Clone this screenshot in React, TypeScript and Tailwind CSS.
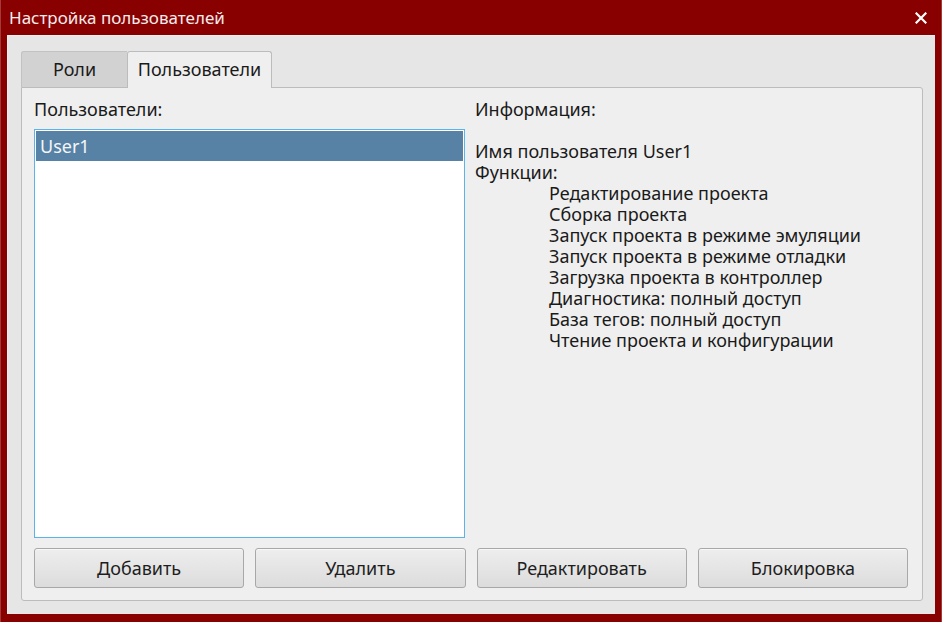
import React from "react";

const font = { fontFamily: '"Noto Sans", "Open Sans", sans-serif' };

function Btn({ label }: { label: string }) {
  return (
    <button className="h-[40px] rounded-[3px] border border-[#a8a8a8] bg-gradient-to-b from-[#eeeeee] to-[#dcdcdc] text-[18px] text-[#1e1e1e] shadow-[inset_0_1px_0_#f8f8f8]">
      {label}
    </button>
  );
}

export default function App() {
  const funcs = [
    "Редактирование проекта",
    "Сборка проекта",
    "Запуск проекта в режиме эмуляции",
    "Запуск проекта в режиме отладки",
    "Загрузка проекта в контроллер",
    "Диагностика: полный доступ",
    "База тегов: полный доступ",
    "Чтение проекта и конфигурации",
  ];
  return (
    <div
      style={font}
      className="w-[942px] h-[622px] bg-[#880000] flex flex-col border-l border-r border-[#a33a3a] text-[18px] text-[#1a1a1a]"
    >
      {/* Title bar */}
      <div className="h-[35px] flex items-center justify-between pl-[8px] pr-[14px] shrink-0">
        <span className="text-[17px] text-[#f6ecec] leading-none">Настройка пользователей</span>
        <svg width="12" height="12" viewBox="0 0 12 12">
          <path d="M1.5 1.5 L10.5 10.5 M10.5 1.5 L1.5 10.5" stroke="#ffffff" strokeWidth="2.2" strokeLinecap="square" />
        </svg>
      </div>
      {/* Body */}
      <div className="flex-1 ml-[6px] mr-[6px] mb-[8px] bg-[#e6e6e6] border-l border-t border-[#f0f0f0] flex flex-col pt-[14px] pl-[13px] pr-[12px] pb-[13px]">
        {/* Tabs */}
        <div className="flex items-end h-[37px] shrink-0">
          <div className="w-[106px] h-[36px] bg-[#d2d2d2] border-t border-l border-[#c2c2c2] rounded-tl-[3px] flex items-center justify-center">
            Роли
          </div>
          <div className="relative z-10 w-[145px] h-[37px] -mb-px bg-[#efefef] border border-b-0 border-[#bcbcbc] rounded-t-[3px] flex items-center justify-center pb-[1px]">
            Пользователи
          </div>
        </div>
        {/* Panel */}
        <div className="flex-1 bg-[#efefef] border border-[#bcbcbc] rounded-b-[3px] rounded-tr-[3px] flex flex-col pt-[11px] pl-[12px] pr-[12px] pb-[12px]">
          <div className="flex-1 grid grid-cols-[431px_1fr] gap-x-[10px]">
            <div className="flex flex-col">
              <div className="h-[21px] leading-[21px] mb-[9px]">Пользователи:</div>
              <div className="flex-1 bg-white border border-[#5cb3e8] pt-[1px] px-[1px]">
                <div className="h-[30px] bg-[#5782a5] text-[#f4f6f8] flex items-center pl-[4px]">User1</div>
              </div>
            </div>
            <div className="flex flex-col leading-[21px]">
              <div>Информация:</div>
              <div className="h-[21px]" />
              <div>Имя пользователя User1</div>
              <div>Функции:</div>
              {funcs.map((f) => (
                <div key={f} className="pl-[74px]">
                  {f}
                </div>
              ))}
            </div>
          </div>
          <div className="grid grid-cols-4 gap-x-[11px] mt-[10px] mr-[2px]">
            <Btn label="Добавить" />
            <Btn label="Удалить" />
            <Btn label="Редактировать" />
            <Btn label="Блокировка" />
          </div>
        </div>
      </div>
    </div>
  );
}
